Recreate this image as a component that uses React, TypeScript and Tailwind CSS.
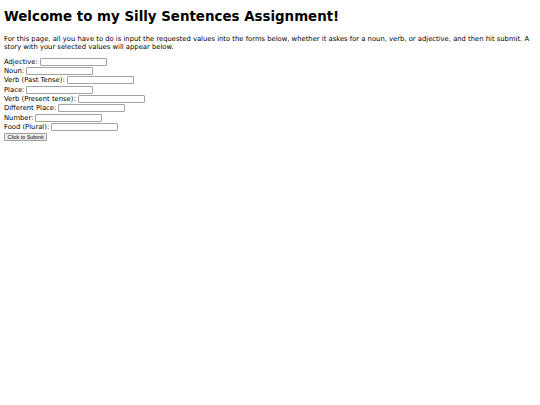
import React from "react";

const fields = [
  "Adjective",
  "Noun",
  "Verb (Past Tense)",
  "Place",
  "Verb (Present tense)",
  "Different Place",
  "Number",
  "Food (Plural)",
];

export default function App() {
  return (
    <div className="min-h-[405px] bg-white px-[4px] pt-[1px] text-black font-['DejaVu_Sans',sans-serif]">
      <h1 className="mt-[8px] mb-[10.4px] text-[13.4px] leading-[16px] font-bold">
        Welcome to my Silly Sentences Assignment!
      </h1>
      <p className="text-[6.8px] leading-[8px]">
        For this page, all you have to do is input the requested values into the forms below, whether it askes for a noun, verb, or adjective, and then hit submit. A story with your selected values will appear below.
      </p>
      <form className="mt-[5.7px] flex flex-col text-[6.8px]" onSubmit={(e) => e.preventDefault()}>
        {fields.map((f) => (
          <div key={f} className="flex h-[9.35px] items-center">
            <label>{f}:</label>
            <input
              type="text"
              className="ml-[2px] h-[8px] w-[67px] rounded-[1px] border-[0.5px] border-[#a3a3a3] bg-white"
            />
          </div>
        ))}
        <div className="mt-[1.5px] flex">
          <button
            type="submit"
            className="flex h-[7.5px] items-center rounded-[1px] border-[0.5px] border-[#9a9a9a] bg-[#efefef] px-[2.5px] text-[5.4px] leading-[6px] font-['Liberation_Sans',sans-serif]"
          >
            Click to Submit
          </button>
        </div>
      </form>
    </div>
  );
}
